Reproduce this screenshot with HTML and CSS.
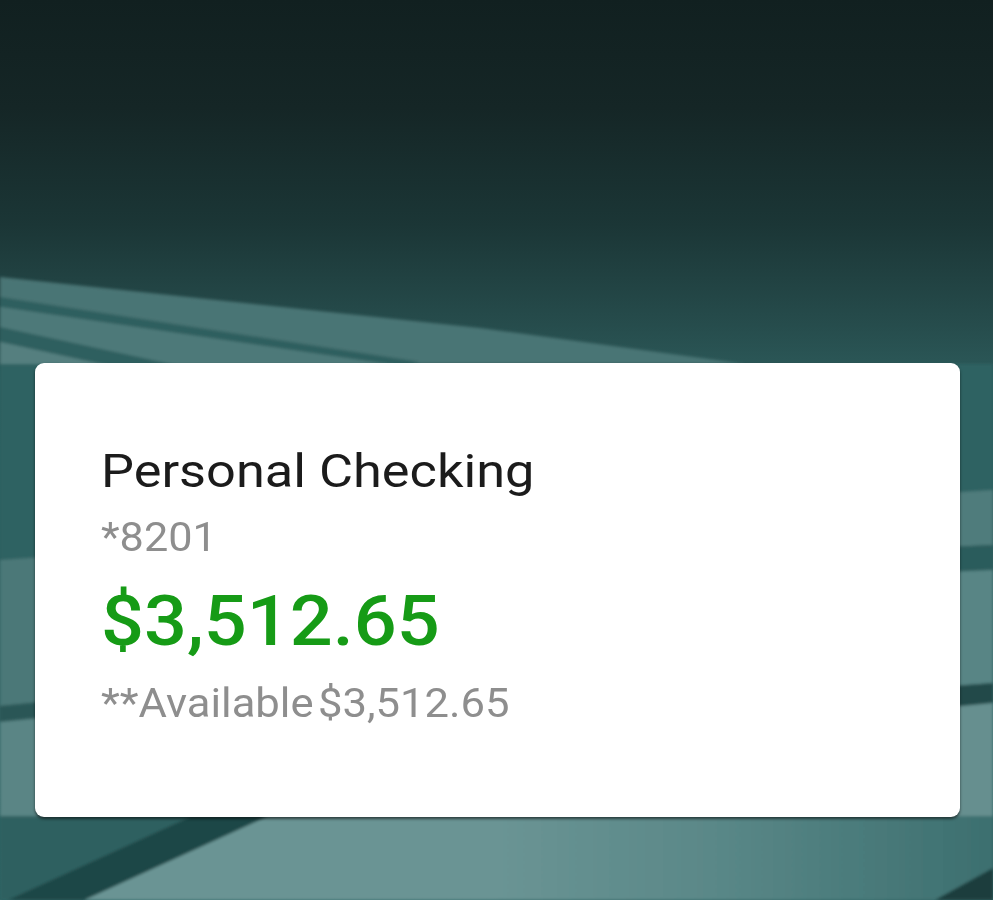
FILE: index.html
```html
<!DOCTYPE html>
<html lang="en">
<head>
<meta charset="utf-8">
<title>Personal Checking</title>
<link rel="stylesheet" href="styles.css">
</head>
<body>
<div class="screen">
  <svg class="wallpaper" viewBox="0 0 993 900" preserveAspectRatio="none" aria-hidden="true">
    <defs>
      <linearGradient id="sky" x1="0" y1="0" x2="0" y2="1">
        <stop offset="0" stop-color="#112020"/>
        <stop offset="0.12" stop-color="#152626"/>
        <stop offset="0.25" stop-color="#1b3636"/>
        <stop offset="0.36" stop-color="#264c4c"/>
        <stop offset="0.43" stop-color="#2d5c5c"/>
        <stop offset="1" stop-color="#306464"/>
      </linearGradient>
      <linearGradient id="floor" x1="0" y1="0" x2="1" y2="0">
        <stop offset="0" stop-color="#6a9494"/>
        <stop offset="0.45" stop-color="#6a9494"/>
        <stop offset="0.7" stop-color="#598787"/>
        <stop offset="1" stop-color="#3c6f6f"/>
      </linearGradient>
      <filter id="soft"><feGaussianBlur stdDeviation="1.5"/></filter>
    </defs>
    <rect x="0" y="0" width="993" height="900" fill="url(#sky)"/>
    <g filter="url(#soft)">
      <polygon points="0,277 480,328 745,364 0,364" fill="#4a7474"/>
      <polygon points="0,297 420,362 400,366 0,307" fill="#2f5f5f"/>
      <polygon points="0,307 400,366 0,366" fill="#4e7979"/>
      <polygon points="0,327 180,366 110,366 0,342" fill="#2f5f5f"/>
      <polygon points="0,342 110,366 0,366" fill="#547f7f"/>
      <polygon points="0,364 60,364 60,560 0,560" fill="#2f6262"/>
      <polygon points="0,560 60,556 60,700 0,706" fill="#4c7878"/>
      <polygon points="0,706 60,700 60,716 0,722" fill="#2a5656"/>
      <polygon points="0,722 60,716 60,820 0,820" fill="#5a8585"/>
      <polygon points="900,364 993,364 993,492 900,496" fill="#2e6262"/>
      <polygon points="900,496 993,490 993,545 900,549" fill="#4f7c7c"/>
      <polygon points="900,549 993,545 993,570 900,574" fill="#2c5b5b"/>
      <polygon points="900,574 993,570 993,683 900,690" fill="#588585"/>
      <polygon points="900,690 993,683 993,703 900,712" fill="#214949"/>
      <polygon points="900,712 993,703 993,820 900,820" fill="#668f8f"/>
      <polygon points="0,816 993,816 993,900 0,900" fill="#2d6161"/>
      <polygon points="268,816 993,816 993,900 84,900" fill="url(#floor)"/>
      <polygon points="192,816 268,816 84,900 8,900" fill="#1f4646"/>
      <polygon points="935,900 993,868 993,900" fill="#1d3c3c"/>
    </g>
  </svg>
  <section class="card">
    <h1 class="title">Personal Checking</h1>
    <p class="acct">*8201</p>
    <p class="balance">$3,512.65</p>
    <p class="avail"><span>**Available</span><span class="avail-amt">$3,512.65</span></p>
  </section>
</div>
</body>
</html>
```
FILE: styles.css
```css
* { box-sizing: border-box; }
html, body { margin: 0; padding: 0; }
body {
  width: 993px;
  height: 900px;
  overflow: hidden;
  font-family: Roboto, "Noto Sans", "Liberation Sans", sans-serif;
  background: #112020;
}
.screen {
  position: relative;
  width: 993px;
  height: 900px;
  padding: 363px 33px 0 35px;
}
.wallpaper {
  position: absolute;
  left: 0;
  top: 0;
  width: 993px;
  height: 900px;
  display: block;
}
.card {
  position: relative;
  width: 925px;
  height: 454px;
  background: #ffffff;
  border-radius: 9px;
  box-shadow: 0 2px 3px rgba(0, 0, 0, 0.55);
  padding: 85px 0 0 66px;
  overflow: hidden;
}
.title,
.acct,
.balance,
.avail {
  width: fit-content;
  transform-origin: left center;
}
.title {
  margin: 0;
  font-size: 46px;
  line-height: 46px;
  font-weight: 400;
  color: #1b1b1b;
  transform: scaleX(1.137);
}
.acct {
  margin: 24px 0 0;
  font-size: 40px;
  line-height: 40px;
  color: #8e8e8e;
  transform: scaleX(1.08);
}
.balance {
  margin: 28px 0 0;
  font-size: 70px;
  line-height: 70px;
  font-weight: 500;
  color: #169b16;
  transform: scaleX(1.08);
}
.avail {
  margin: 28px 0 0;
  font-size: 40px;
  line-height: 40px;
  color: #8e8e8e;
  display: flex;
  gap: 4px;
  transform: scaleX(1.09);
}
```
